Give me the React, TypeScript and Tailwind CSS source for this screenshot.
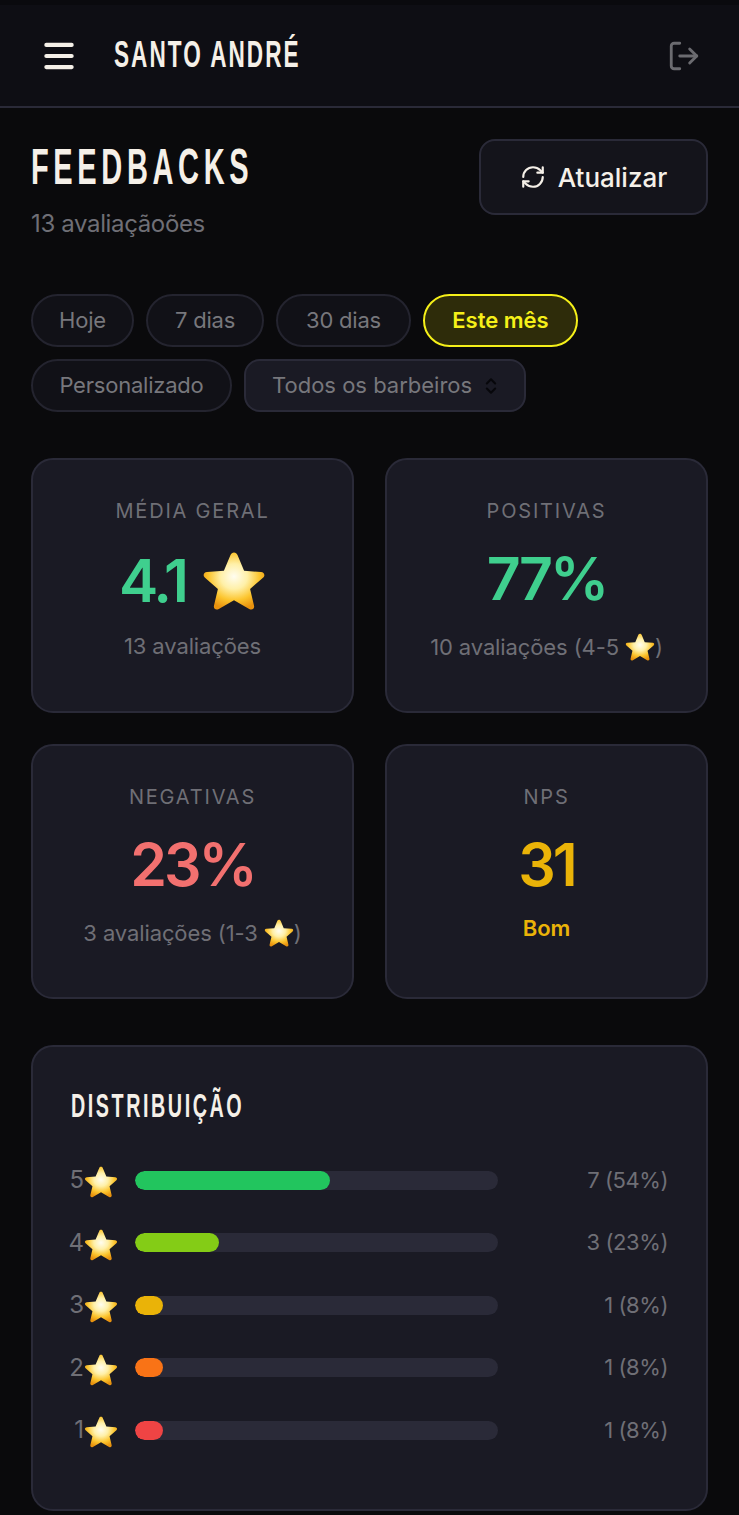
import { useId } from 'react'
import { Menu, LogOut, RefreshCw, ChevronsUpDown } from 'lucide-react'

function Star({ size }: { size: number }) {
  const id = useId()
  return (
    <svg width={size} height={size} viewBox="0 0 64 64" className="inline-block shrink-0">
      <defs>
        <radialGradient id={id} cx="50%" cy="42%" r="58%">
          <stop offset="0%" stopColor="#fffdf0" />
          <stop offset="38%" stopColor="#fff0a8" />
          <stop offset="72%" stopColor="#fcc52e" />
          <stop offset="100%" stopColor="#e8920e" />
        </radialGradient>
      </defs>
      <path
        d="M32 3.500c1.600 0 2.800 1 3.500 2.600l6.600 15.600 16.900 1.400c3.400.3 4.500 3.500 2 5.700L48.100 39.900l3.900 16.500c.8 3.300-1.900 5.300-4.800 3.600L32 51.200 16.800 60c-2.900 1.700-5.600-.3-4.800-3.600l3.900-16.500L3 28.800c-2.500-2.200-1.400-5.400 2-5.700l16.900-1.400 6.600-15.600C29.200 4.500 30.400 3.500 32 3.500z"
        fill={`url(#${id})`}
      />
    </svg>
  )
}

const periodos = [
  { nome: 'Hoje', largura: 'w-[103px]' },
  { nome: '7 dias', largura: 'w-[118px]' },
  { nome: '30 dias', largura: 'w-[135px]' },
]

const distribuicao = [
  { nota: 5, pct: 54, qtd: 7, cor: 'bg-[#22c55e]' },
  { nota: 4, pct: 23, qtd: 3, cor: 'bg-[#84cc16]' },
  { nota: 3, pct: 8, qtd: 1, cor: 'bg-[#eab308]' },
  { nota: 2, pct: 8, qtd: 1, cor: 'bg-[#f97316]' },
  { nota: 1, pct: 8, qtd: 1, cor: 'bg-[#ef4444]' },
]

const pill = 'h-[53px] rounded-full border-2 border-[#24242f] bg-[#111117] text-[22px] tracking-[-0.01em] text-[#77777c]'
const card = 'flex h-[255px] flex-col items-center rounded-[22px] border-2 border-[#2a2a38] bg-[#1a1a24] pt-[37px]'
const label = 'text-[20px] leading-[28px] tracking-[0.09em] text-[#6f6f76]'
const sub = 'text-[22px] leading-[30px] tracking-[-0.005em] text-[#6f6f76]'
const big = 'text-[59px] font-semibold leading-[70px] tracking-[-0.05em]'

export default function App() {
  return (
    <div className="h-[1515px] overflow-hidden bg-[#0a0a0c] font-['Inter',sans-serif]">
      {/* Header */}
      <header className="flex h-[108px] items-center justify-between border-b-2 border-t-[5px] border-b-[#2a2a38] border-t-[#0a0a0e] bg-[#0e0e14] pl-[40px] pr-[38px]">
        <div className="flex items-center gap-[36px]">
          <Menu size={38} strokeWidth={2.6} className="text-[#f5f0e8]" />
          <span className="mt-[-2px] w-[184px] origin-left scale-x-[0.61] whitespace-nowrap font-['Liberation_Sans',sans-serif] text-[37px] font-bold leading-none tracking-[0.09em] text-[#f5f0e8]">
            SANTO ANDRÉ
          </span>
        </div>
        <LogOut size={34} strokeWidth={2} className="text-[#6b6b70]" />
      </header>

      <main className="px-[31px]">
        {/* Title */}
        <div className="flex items-start justify-between pt-[31px]">
          <div>
            <h1 className="w-[221px] origin-left scale-x-[0.58] whitespace-nowrap font-['Liberation_Sans',sans-serif] text-[50px] font-bold leading-[56px] tracking-[0.16em] text-[#f5f0e8]">
              FEEDBACKS
            </h1>
            <p className="mt-[13px] text-[24px] leading-[32px] tracking-[-0.015em] text-[#6f6f76]">13 avaliaçãoões</p>
          </div>
          <button className="flex h-[76px] w-[229px] items-center justify-center gap-[12px] rounded-[16px] border-2 border-[#2a2a38] bg-[#14141b] text-[26px] font-medium text-[#f5f0e8]">
            <RefreshCw size={26} strokeWidth={2} />
            Atualizar
          </button>
        </div>

        {/* Filters */}
        <div className="mt-[54px] flex flex-wrap gap-x-[12px] gap-y-[12px]">
          {periodos.map((p) => (
            <button key={p.nome} className={`${pill} ${p.largura}`}>
              {p.nome}
            </button>
          ))}
          <button className="h-[53px] w-[155px] rounded-full border-2 border-[#f5f019] bg-[#2e2c0a] text-[22px] font-semibold text-[#f5f019]">
            Este mês
          </button>
          <button className={`${pill} w-[201px]`}>Personalizado</button>
          <button className="flex h-[53px] w-[282px] items-center gap-[9px] rounded-[16px] border-2 border-[#2a2a38] bg-[#1a1a24] pl-[26px] text-[22px] text-[#77777c]">
            Todos os barbeiros
            <ChevronsUpDown size={20} strokeWidth={2.5} className="text-[#07070b]" />
          </button>
        </div>

        {/* Cards */}
        <div className="mt-[46px] grid grid-cols-2 gap-x-[31px] gap-y-[31px]">
          <div className={card}>
            <span className={label}>MÉDIA GERAL</span>
            <div className="mt-[21px] flex h-[70px] items-center gap-[16px]">
              <span className={`${big} text-[#3fcf8e]`}>4.1</span>
              <Star size={64} />
            </div>
            <span className={`${sub} mt-[15px]`}>13 avaliações</span>
          </div>
          <div className={card}>
            <span className={label}>POSITIVAS</span>
            <span className={`${big} mt-[19px] text-[#3fcf8e]`}>77%</span>
            <span className={`${sub} mt-[18px] flex items-center gap-[6px]`}>
              <span>10 avaliações (4-5</span>
              <span className="flex items-center">
                <Star size={30} />)
              </span>
            </span>
          </div>
          <div className={card}>
            <span className={label}>NEGATIVAS</span>
            <span className={`${big} mt-[19px] text-[#f2706f]`}>23%</span>
            <span className={`${sub} mt-[18px] flex items-center gap-[6px]`}>
              <span>3 avaliações (1-3</span>
              <span className="flex items-center">
                <Star size={30} />)
              </span>
            </span>
          </div>
          <div className={card}>
            <span className={label}>NPS</span>
            <span className={`${big} mt-[19px] text-[#eab308]`}>31</span>
            <span className="mt-[13px] text-[22px] font-semibold leading-[30px] text-[#eab308]">Bom</span>
          </div>
        </div>

        {/* Distribution */}
        <section className="mt-[46px] h-[466px] rounded-[22px] border-2 border-[#2a2a38] bg-[#1a1a24] pl-[38px] pr-[38px] pt-[38px]">
          <h2 className="w-[172px] origin-left scale-x-[0.58] whitespace-nowrap font-['Liberation_Sans',sans-serif] text-[34px] font-bold leading-[40px] tracking-[0.13em] text-[#f5f0e8]">
            DISTRIBUIÇÃO
          </h2>
          <div className="mt-[37px] flex flex-col gap-[26.5px]">
            {distribuicao.map((d) => (
              <div key={d.nota} className="flex h-[36px] items-center">
                <div className="flex w-[64px] shrink-0 items-center justify-end pr-[17px]">
                  <span className="text-[24px] leading-none text-[#6f6f76]">{d.nota}</span>
                  <span className="mt-[4px] flex">
                    <Star size={34} />
                  </span>
                </div>
                <div className="h-[19px] w-[363px] shrink-0 overflow-hidden rounded-full bg-[#2a2a38]">
                  <div className={`h-full rounded-full ${d.cor}`} style={{ width: `${(d.qtd / 13) * 100}%` }} />
                </div>
                <span className="flex-1 text-right text-[22px] tracking-[-0.02em] text-[#6f6f76]">
                  {d.qtd} ({d.pct}%)
                </span>
              </div>
            ))}
          </div>
        </section>
      </main>
    </div>
  )
}
